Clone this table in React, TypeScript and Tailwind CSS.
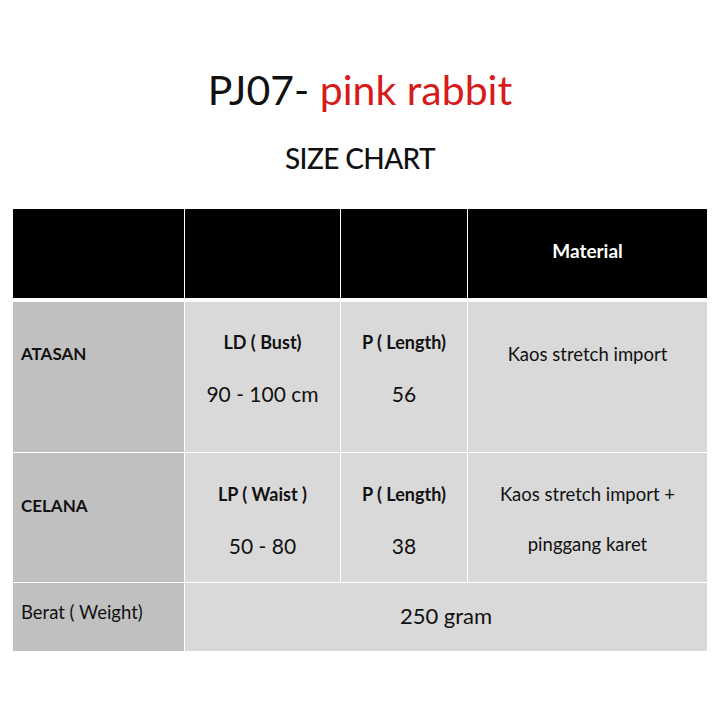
import React from 'react';

const font = { fontFamily: 'Lato, "Open Sans", sans-serif' };

const App: React.FC = () => {
  return (
    <div className="w-[720px] h-[720px] bg-white text-[#111]" style={font}>
      {/* Judul */}
      <div className="pt-[66px] text-center text-[41px] leading-[48px]">
        <span>PJ07- </span>
        <span className="text-[#d71a1a]">pink rabbit</span>
      </div>
      <div className="mt-[26px] text-center text-[28px] leading-[36px] tracking-[-0.6px] font-medium">
        SIZE CHART
      </div>

      {/* Tabel ukuran */}
      <div className="mt-[33px] ml-[13px] w-[694px] grid grid-cols-[171px_155px_126px_239px] grid-rows-[89px_154px_130px_69px] gap-x-px">
        {/* Header */}
        <div className="bg-black" />
        <div className="bg-black" />
        <div className="bg-black" />
        <div className="bg-black text-white font-bold text-[19px] text-center pt-[28px]">Material</div>

        {/* Atasan */}
        <div className="bg-[#c0c0c0] mt-[4px] font-bold text-[17px] pl-[8px] pt-[39px]">ATASAN</div>
        <div className="bg-[#d9d9d9] mt-[4px] text-center pt-[28px]">
          <div className="font-bold text-[18px] leading-[24px]">LD ( Bust)</div>
          <div className="text-[21px] leading-[28px] mt-[26px]">90 - 100 cm</div>
        </div>
        <div className="bg-[#d9d9d9] mt-[4px] text-center pt-[28px]">
          <div className="font-bold text-[18px] leading-[24px]">P ( Length)</div>
          <div className="text-[21px] leading-[28px] mt-[26px]">56</div>
        </div>
        <div className="bg-[#d9d9d9] mt-[4px] text-center text-[18.5px] pt-[39px]">Kaos stretch import</div>

        {/* Celana */}
        <div className="bg-[#c0c0c0] mt-px font-bold text-[17px] pl-[8px] pt-[40px]">CELANA</div>
        <div className="bg-[#d9d9d9] mt-px text-center pt-[29px]">
          <div className="font-bold text-[18px] leading-[24px]">LP ( Waist )</div>
          <div className="text-[21px] leading-[28px] mt-[26px]">50 - 80</div>
        </div>
        <div className="bg-[#d9d9d9] mt-px text-center pt-[29px]">
          <div className="font-bold text-[18px] leading-[24px]">P ( Length)</div>
          <div className="text-[21px] leading-[28px] mt-[26px]">38</div>
        </div>
        <div className="bg-[#d9d9d9] mt-px text-center text-[18.5px] pt-[29px]">
          <div className="leading-[24px]">Kaos stretch import +</div>
          <div className="leading-[24px] mt-[26px]">pinggang karet</div>
        </div>

        {/* Berat */}
        <div className="bg-[#c0c0c0] mt-px text-[18.5px] pl-[8px] pt-[16px]">Berat ( Weight)</div>
        <div className="col-span-3 bg-[#d9d9d9] mt-px text-center text-[22px] pt-[16px]">250 gram</div>
      </div>
    </div>
  );
};

export default App;
